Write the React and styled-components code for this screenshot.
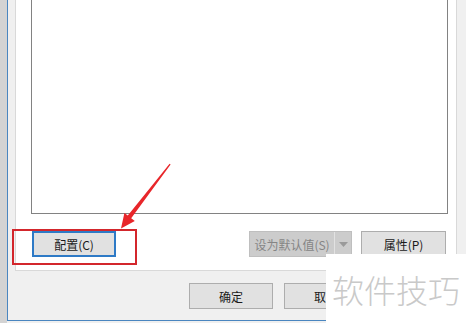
import { createGlobalStyle } from 'styled-components'
import styled from 'styled-components'

const GlobalStyle = createGlobalStyle`
  html, body {
    margin: 0;
    padding: 0;
    background: #f0f0f0;
    overflow: hidden;
  }
  body {
    font-family: "Microsoft YaHei", "Noto Sans CJK SC", "Noto Sans", sans-serif;
  }
`

const Screen = styled.div`
  position: relative;
  width: 466px;
  height: 323px;
  display: flex;
  overflow: hidden;
  background: #f0f0f0;
`

const Desktop = styled.div`
  width: 7px;
  background: #d3d3d3;
`

const Window = styled.div`
  flex: 1;
  height: 320px;
  display: flex;
  flex-direction: column;
  background: #f0f0f0;
  border-left: 1px solid #4a86c0;
  border-bottom: 1px solid #4a86c0;
  padding-left: 7px;
`

const TabPanel = styled.div`
  width: 442px;
  height: 271px;
  box-sizing: border-box;
  background: #fff;
  border: 1px solid #d9d9d9;
  border-top: none;
  padding: 0 10px 0 15px;
  display: flex;
  flex-direction: column;
`

const ListBox = styled.div`
  width: 417px;
  height: 214px;
  box-sizing: border-box;
  background: #fff;
  border: 1px solid #828282;
  border-top: none;
`

const ButtonRow = styled.div`
  display: flex;
  align-items: center;
  margin-top: 17px;
  padding-left: 1px;
`

const Button = styled.div`
  width: ${(p) => p.$w || 86}px;
  height: 26px;
  box-sizing: border-box;
  display: flex;
  align-items: center;
  justify-content: center;
  font-size: 12px;
  color: #1a1a1a;
  background: #e1e1e1;
  border: ${(p) => (p.$default ? '2px solid #2e7ac6' : '1px solid #adadad')};
  margin-left: ${(p) => p.$ml || 0}px;
`

const SplitButton = styled.div`
  display: flex;
  height: 26px;
  margin-left: 133px;
  background: #cccccc;
  border: 1px solid #bfbfbf;
  box-sizing: border-box;
`

const SplitMain = styled.div`
  width: 84px;
  display: flex;
  align-items: center;
  justify-content: center;
  font-size: 12px;
  color: #858585;
  border-right: 1px solid #e2e2e2;
`

const SplitArrow = styled.div`
  width: 16px;
  display: flex;
  align-items: center;
  justify-content: center;
`

const BottomBar = styled.div`
  display: flex;
  padding: 12px 0 0 174px;
  gap: 11px;
`

const Annotation = styled.div`
  position: absolute;
  left: 12px;
  top: 229px;
  width: 125px;
  height: 36px;
  box-sizing: border-box;
  border: 2px solid #d3262c;
`

const ArrowLayer = styled.svg`
  position: absolute;
  left: 0;
  top: 0;
  pointer-events: none;
`

const Watermark = styled.div`
  position: absolute;
  left: 326px;
  top: 254px;
  width: 140px;
  height: 69px;
  background: #fff;
  display: flex;
  align-items: center;
  padding-left: 6px;
  box-sizing: border-box;
  font-size: 32px;
  letter-spacing: 0px;
  color: #c9c9c9;
  font-family: "Noto Sans CJK SC", sans-serif;
  font-weight: 300;
`

export default function App() {
  return (
    <Screen>
      <GlobalStyle />
      <Desktop />
      <Window>
        <TabPanel>
          <ListBox />
          <ButtonRow>
            <Button $default>配置(C)</Button>
            <SplitButton>
              <SplitMain>设为默认值(S)</SplitMain>
              <SplitArrow>
                <svg width="9" height="5" viewBox="0 0 9 5">
                  <path d="M0 0 L9 0 L4.5 5 Z" fill="#9a9a9a" />
                </svg>
              </SplitArrow>
            </SplitButton>
            <Button $w={87} $ml={9}>属性(P)</Button>
          </ButtonRow>
        </TabPanel>
        <BottomBar>
          <Button $w={84}>确定</Button>
          <Button $w={84}>取消</Button>
        </BottomBar>
      </Window>
      <Annotation />
      <ArrowLayer width="466" height="323" viewBox="0 0 466 323">
        <polygon
          points="169.6,163.7 170.6,164.4 131.2,218.2 134.8,221 121,228.5 124.4,213 127.8,215.6"
          fill="#e8262a"
        />
      </ArrowLayer>
      <Watermark>软件技巧</Watermark>
    </Screen>
  )
}
